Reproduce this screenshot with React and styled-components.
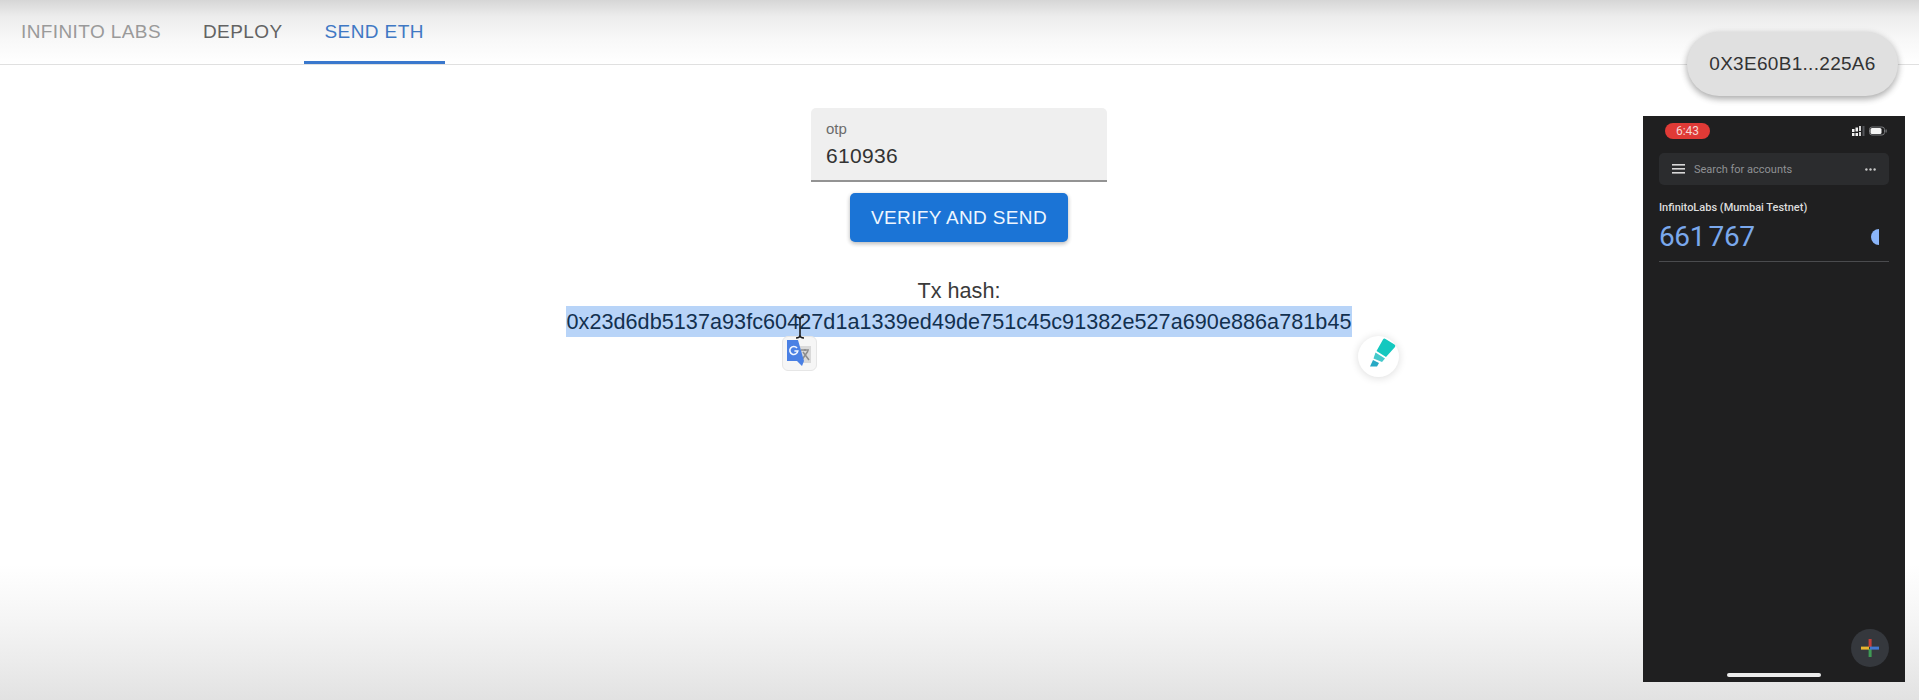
import React from 'react';
import styled, { createGlobalStyle } from 'styled-components';

const GlobalStyle = createGlobalStyle`
  html, body {
    margin: 0;
    padding: 0;
    background: #fff;
    font-family: 'Liberation Sans', Arial, sans-serif;
  }
`;

const Page = styled.div`
  position: relative;
  height: 700px;
  overflow: hidden;
  background: linear-gradient(
    to bottom,
    #d6d6d6 0,
    #ececec 16px,
    #f8f8f8 40px,
    #fff 64px,
    #fff 565px,
    #f5f5f5 620px,
    #ececec 660px,
    #e2e2e2 700px
  );
`;

const TabBar = styled.nav`
  display: flex;
  height: 64px;
  border-bottom: 1px solid #e0e0e0;
`;

const Tab = styled.div`
  display: flex;
  align-items: center;
  justify-content: center;
  height: 100%;
  padding: 3px 21px 0;
  box-sizing: border-box;
  font-size: 19px;
  letter-spacing: 0.4px;
  color: ${(p) => p.$color};
  border-bottom: 3px solid ${(p) => (p.$active ? '#3a78cd' : 'transparent')};
`;

const Main = styled.main`
  display: flex;
  flex-direction: column;
  align-items: center;
  padding-top: 43px;
  margin-right: 1px;
`;

const Field = styled.div`
  width: 296px;
  height: 74px;
  box-sizing: border-box;
  padding: 12px 15px 0;
  background: #efefef;
  border-radius: 5px 5px 0 0;
  border-bottom: 2px solid #939393;
`;

const FieldLabel = styled.div`
  font-size: 15px;
  line-height: 18px;
  color: #6b6b6b;
`;

const FieldValue = styled.div`
  margin-top: 5px;
  font-size: 21px;
  line-height: 26px;
  letter-spacing: 0.3px;
  color: #333;
`;

const SendButton = styled.button`
  width: 218px;
  height: 49px;
  margin-top: 11px;
  padding: 0;
  border: none;
  border-radius: 5px;
  background: #1b74d6;
  color: #eef6ff;
  font-family: inherit;
  font-size: 19px;
  letter-spacing: 0.35px;
  box-shadow: 0 2px 4px rgba(0, 0, 0, 0.2), 0 1px 5px rgba(0, 0, 0, 0.1);
`;

const TxBlock = styled.div`
  position: relative;
  display: flex;
  flex-direction: column;
  align-items: center;
  margin-top: 33px;
`;

const TxLabel = styled.div`
  font-size: 21.6px;
  line-height: 31px;
  color: #3a3a3a;
`;

const TxHash = styled.div`
  font-size: 21.6px;
  line-height: 31px;
  letter-spacing: 0.05px;
  color: #12304f;
  background: #b8d4f8;
  white-space: nowrap;
`;

const TranslateBadge = styled.div`
  position: absolute;
  left: 216px;
  top: 61px;
  width: 35px;
  height: 35px;
  display: flex;
  align-items: center;
  justify-content: center;
  background: #f6f6f6;
  border: 1px solid #e6e6e6;
  border-radius: 6px;
  box-sizing: border-box;
`;

const TextCursor = styled.svg`
  position: absolute;
  left: 228px;
  top: 41px;
  z-index: 1;
`;

const HighlightBadge = styled.div`
  position: absolute;
  left: 792px;
  top: 61px;
  width: 41px;
  height: 41px;
  display: flex;
  align-items: center;
  justify-content: center;
  background: #fff;
  border-radius: 50%;
  box-shadow: 0 1px 8px rgba(0, 0, 0, 0.14);
`;

const HighlighterSvg = styled.svg`
  flex: none;
  margin: 0 0 8px 8px;
`;

const AddressPill = styled.div`
  position: absolute;
  left: 1687px;
  top: 32px;
  width: 211px;
  height: 64px;
  display: flex;
  align-items: center;
  justify-content: center;
  border-radius: 32px;
  background: #e0e0e0;
  color: #333;
  font-size: 19px;
  letter-spacing: 0.3px;
  box-shadow: 0 3px 6px rgba(0, 0, 0, 0.25), 0 2px 8px rgba(0, 0, 0, 0.12);
`;

const Phone = styled.aside`
  position: absolute;
  left: 1643px;
  top: 116px;
  width: 262px;
  height: 566px;
  box-sizing: border-box;
  padding: 7px 16px 0;
  display: flex;
  flex-direction: column;
  background: #1f1f20;
  font-family: Roboto, 'Liberation Sans', sans-serif;
`;

const StatusRow = styled.div`
  display: flex;
  align-items: center;
  justify-content: space-between;
  height: 16px;
  padding-left: 6px;
  padding-right: 1px;
`;

const Clock = styled.div`
  width: 45px;
  height: 16px;
  border-radius: 8px;
  background: #e03a36;
  color: #f6d7d5;
  font-size: 12px;
  line-height: 16px;
  text-align: center;
`;

const SearchBar = styled.div`
  display: flex;
  align-items: center;
  height: 32px;
  margin-top: 14px;
  padding: 0 13px;
  gap: 9px;
  border-radius: 5px;
  background: #2b2c2e;
`;

const SearchText = styled.span`
  flex: 1;
  color: #8f9194;
  font-size: 11px;
`;

const AccountName = styled.div`
  margin-top: 16px;
  color: #dcdcdc;
  font-size: 11px;
  line-height: 14px;
  font-weight: 500;
  white-space: nowrap;
`;

const CodeRow = styled.div`
  display: flex;
  align-items: center;
  justify-content: space-between;
  margin-top: 5px;
  height: 34px;
  padding-right: 10px;
`;

const Code = styled.div`
  color: #7aa8ec;
  font-size: 28px;
  line-height: 34px;
  letter-spacing: -0.4px;
  word-spacing: -3px;
  white-space: nowrap;
`;

const CodeDivider = styled.div`
  height: 1px;
  margin-top: 7px;
  background: #4a4b4e;
`;

const Fab = styled.div`
  position: absolute;
  right: 16px;
  bottom: 15px;
  width: 38px;
  height: 38px;
  display: flex;
  align-items: center;
  justify-content: center;
  border-radius: 50%;
  background: #35383d;
`;

const HomeBar = styled.div`
  position: absolute;
  left: 84px;
  bottom: 5px;
  width: 94px;
  height: 4px;
  border-radius: 2px;
  background: #ececec;
`;

const SignalIcon = () => (
  <svg width="36" height="10" viewBox="0 0 36 10">
    <g fill="#f2f2f2">
      <rect x="0" y="3" width="2.5" height="3" />
      <rect x="0" y="7" width="2.5" height="3" />
      <rect x="3.5" y="1.5" width="2.5" height="4" />
      <rect x="3.5" y="7" width="2.5" height="3" />
      <rect x="7" y="0" width="2" height="5" fill="#d5d5d5" />
      <rect x="7" y="6" width="2" height="4" fill="#d5d5d5" />
    </g>
    <rect x="10.5" y="0" width="2" height="10" fill="#55565a" />
    <rect x="17.5" y="1" width="15" height="8" rx="2.5" fill="none" stroke="#77787b" />
    <rect x="18.5" y="2" width="11" height="6" rx="1.5" fill="#f4f4f4" />
    <rect x="33.5" y="3.5" width="1.2" height="3" fill="#77787b" />
  </svg>
);

const MenuIcon = () => (
  <svg width="13" height="10" viewBox="0 0 13 10" fill="#d8d8d8">
    <rect y="0" width="13" height="1.6" />
    <rect y="4" width="13" height="1.6" />
    <rect y="8" width="13" height="1.6" />
  </svg>
);

const DotsIcon = () => (
  <svg width="11" height="3" viewBox="0 0 11 3" fill="#c8c8c8">
    <circle cx="1.4" cy="1.5" r="1.2" />
    <circle cx="5.5" cy="1.5" r="1.2" />
    <circle cx="9.6" cy="1.5" r="1.2" />
  </svg>
);

const TimerPie = () => (
  <svg width="9" height="16" viewBox="0 0 9 16">
    <path d="M9 0 A8 8 0 0 0 9 16 Z" fill="#8ab4f8" />
  </svg>
);

const PlusIcon = () => (
  <svg width="18" height="18" viewBox="0 0 18 18">
    <rect x="7.6" y="0" width="3" height="8" fill="#c5403a" />
    <rect x="7.6" y="10" width="3" height="8" fill="#3f9a55" />
    <rect x="0" y="7.6" width="8" height="3" fill="#e8b52e" />
    <rect x="9" y="7.6" width="9" height="3" fill="#4478d0" />
  </svg>
);

const TranslateIcon = () => (
  <svg width="25" height="27" viewBox="0 0 25 27">
    <path d="M11 6 H24 V23 H15 Z" fill="#d9d9d9" />
    <path d="M14 10 H22 M18 9 V11 M15.5 19 L21 11 M16 12 L22 20" stroke="#8c8c8c" strokeWidth="1.5" fill="none" />
    <path d="M0 0 H11 L17 21 L15 26 L10 21 H0 Z" fill="#4a80e4" />
    <path
      d="M10 8 A4 4 0 1 0 10.8 11 H7.4"
      stroke="#f2f6ff"
      strokeWidth="1.6"
      fill="none"
    />
  </svg>
);

const HighlighterIcon = () => (
  <HighlighterSvg width="26" height="29" viewBox="0 0 26 29">
    <path d="M13 1.5 Q14 0 15.5 1 L24.5 6.5 Q26 7.5 25 9 L16 19 L6.5 13 Z" fill="#14c8bf" />
    <path d="M5.5 14.5 L15 20.5 L12 24 L3.5 20.5 Z" fill="#45c9cb" />
    <path d="M3 22 L9 25 L7 28.5 L0 28.5 Z" fill="#28a9c4" />
  </HighlighterSvg>
);

const App = () => {
  return (
    <Page>
      <GlobalStyle />
      <TabBar>
        <Tab $color="#9a9a9a">INFINITO LABS</Tab>
        <Tab $color="#636363">DEPLOY</Tab>
        <Tab $color="#3f78c4" $active>SEND ETH</Tab>
      </TabBar>

      <Main>
        <Field>
          <FieldLabel>otp</FieldLabel>
          <FieldValue>610936</FieldValue>
        </Field>
        <SendButton>VERIFY AND SEND</SendButton>
        <TxBlock>
          <TxLabel>Tx hash:</TxLabel>
          <TxHash>0x23d6db5137a93fc60427d1a1339ed49de751c45c91382e527a690e886a781b45</TxHash>
          <TextCursor width="12" height="23" viewBox="0 0 12 23">
            <path d="M2 1 Q6 1 6 4 V19 Q6 22 2 22 M10 1 Q6 1 6 4 M6 19 Q6 22 10 22" stroke="#1b1b1b" strokeWidth="1.6" fill="none" />
          </TextCursor>
          <TranslateBadge>
            <TranslateIcon />
          </TranslateBadge>
          <HighlightBadge>
            <HighlighterIcon />
          </HighlightBadge>
        </TxBlock>
      </Main>

      <AddressPill>0X3E60B1...225A6</AddressPill>

      <Phone>
        <StatusRow>
          <Clock>6:43</Clock>
          <SignalIcon />
        </StatusRow>
        <SearchBar>
          <MenuIcon />
          <SearchText>Search for accounts</SearchText>
          <DotsIcon />
        </SearchBar>
        <AccountName>InfinitoLabs (Mumbai Testnet)</AccountName>
        <CodeRow>
          <Code>661 767</Code>
          <TimerPie />
        </CodeRow>
        <CodeDivider />
        <Fab>
          <PlusIcon />
        </Fab>
        <HomeBar />
      </Phone>
    </Page>
  );
};

export default App;
